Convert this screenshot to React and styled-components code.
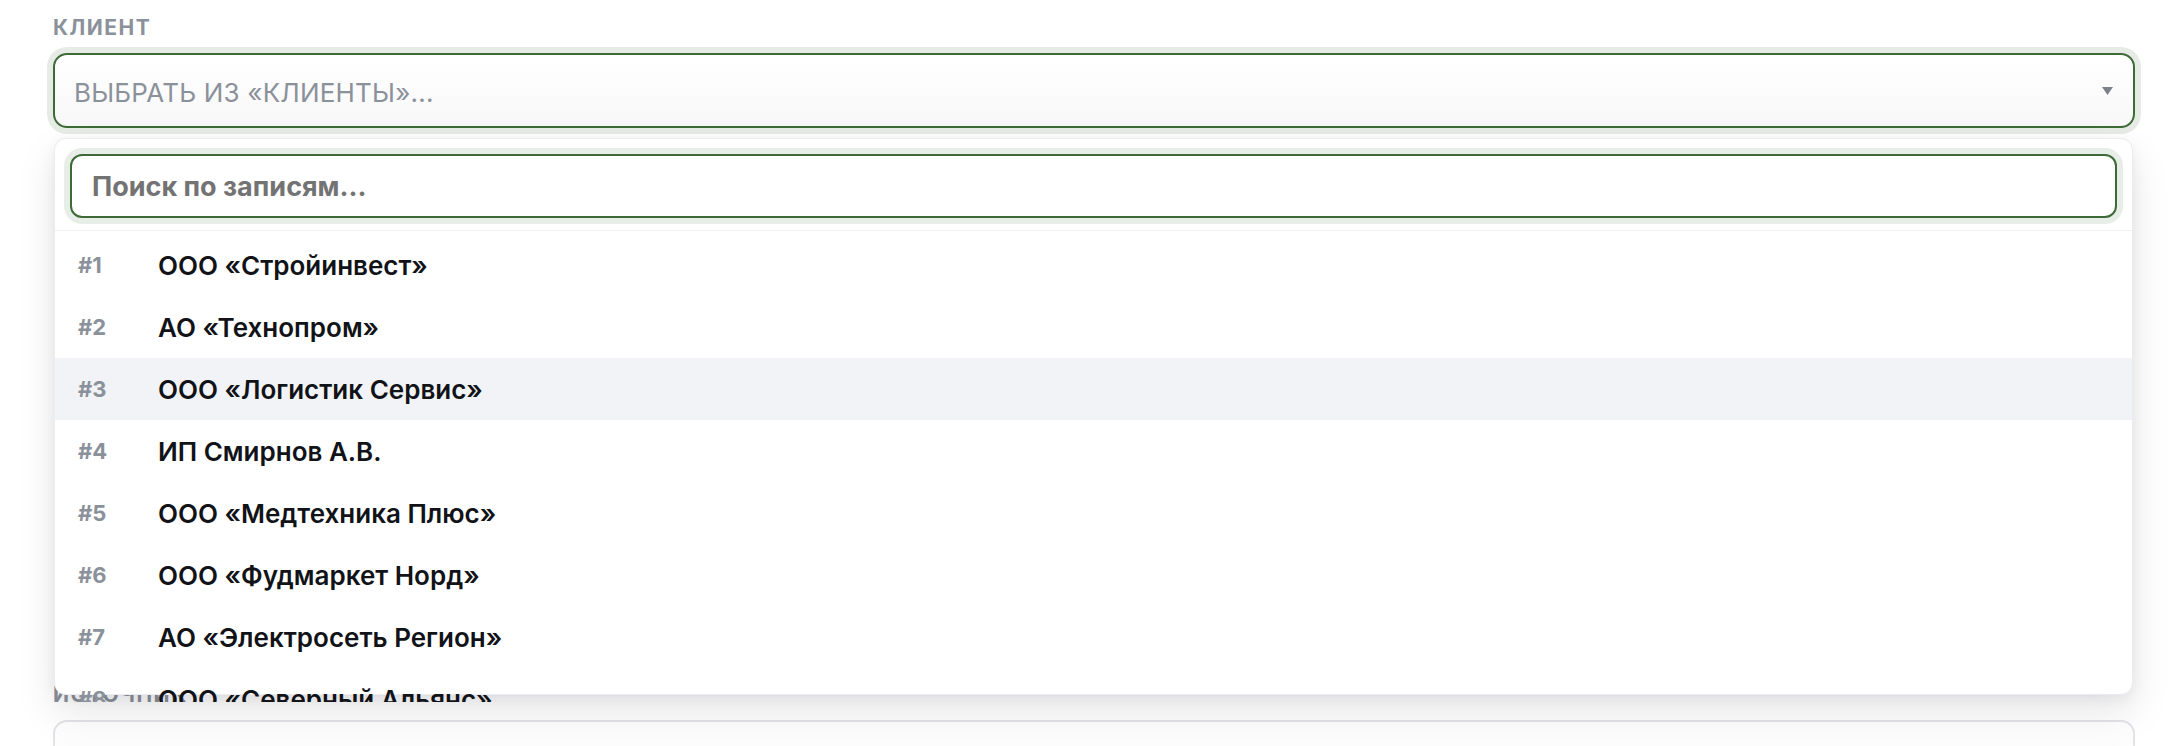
import React from "react";
import styled, { createGlobalStyle } from "styled-components";

const GlobalStyle = createGlobalStyle`
    html, body {
        margin: 0;
        background: #ffffff;
    }
    body {
        font-family: Inter, "Noto Sans", sans-serif;
        -webkit-font-smoothing: antialiased;
    }
`;

const Page = styled.div`
    box-sizing: border-box;
    height: 746px;
    overflow: hidden;
    padding: 16px 47px 0 53px;
`;

const Field = styled.div`
    position: relative;
    margin-bottom: ${props => props.$spacing || 0}px;
`;

const Label = styled.div`
    font-size: 21px;
    line-height: 24px;
    font-weight: 700;
    letter-spacing: 1.5px;
    text-transform: uppercase;
    color: #8b919a;
    margin-bottom: 13px;
`;

const SelectBox = styled.div`
    box-sizing: border-box;
    height: 75px;
    display: flex;
    align-items: center;
    justify-content: space-between;
    padding: 0 20px 0 ${props => props.$indent || 19}px;
    border: 2px solid ${props => (props.$open ? "#3d6a37" : "#e3e3e9")};
    border-radius: 14px;
    box-shadow: ${props => (props.$open ? "0 0 0 6px rgba(61, 106, 55, 0.13)" : "none")};
    background: linear-gradient(180deg, #ffffff 0%, #f8f8f9 100%);
`;

const Placeholder = styled.span`
    font-size: 26px;
    font-weight: 400;
    letter-spacing: 0.2px;
    text-transform: uppercase;
    color: #8b919a;
    padding-top: 4px;
`;

const Value = styled.span`
    font-size: 26px;
    font-weight: 600;
    color: #16181d;
`;

const Panel = styled.div`
    position: absolute;
    z-index: 10;
    top: calc(100% + 10px);
    left: 1px;
    right: 2px;
    height: 557px;
    box-sizing: border-box;
    border: 1px solid #ebebf0;
    border-radius: 12px;
    background: #ffffff;
    box-shadow: 0 18px 40px rgba(20, 20, 40, 0.1), 0 4px 14px rgba(20, 20, 40, 0.06);
`;

const SearchWrap = styled.div`
    padding: 15px 15px 12px;
    border-bottom: 1px solid #efeff3;
`;

const SearchInput = styled.input`
    display: block;
    width: 100%;
    height: 64px;
    box-sizing: border-box;
    padding: 0 20px;
    border: 2px solid #3d6a37;
    border-radius: 12px;
    box-shadow: 0 0 0 6px rgba(61, 106, 55, 0.12);
    outline: none;
    font-family: inherit;
    font-size: 27px;
    font-weight: 700;
    color: #222;
    background: #fff;
    &::placeholder {
        color: #737373;
        opacity: 1;
    }
`;

const List = styled.div`
    height: 471px;
    box-sizing: border-box;
    padding-top: 3px;
    overflow: hidden;
`;

const Row = styled.div`
    display: flex;
    align-items: center;
    height: 62px;
    padding-left: 23px;
    background: ${props => (props.$active ? "#f2f3f6" : "transparent")};
`;

const Num = styled.span`
    width: 80px;
    flex-shrink: 0;
    font-size: 22px;
    font-weight: 700;
    color: #8b919a;
`;

const Name = styled.span`
    font-size: 26px;
    font-weight: 600;
    color: #111318;
`;

const Chevron = () => (
    <svg width="11" height="8" viewBox="0 0 11 8">
        <polygon points="0,0 11,0 5.5,8" fill="#7c828b" />
    </svg>
);

const clients = [
    "ООО «Стройинвест»",
    "АО «Технопром»",
    "ООО «Логистик Сервис»",
    "ИП Смирнов А.В.",
    "ООО «Медтехника Плюс»",
    "ООО «Фудмаркет Норд»",
    "АО «Электросеть Регион»",
    "ООО «Северный Альянс»",
    "ИП Кузнецова Е.Н.",
    "ООО «Агроресурс»",
];

function App() {
    const [hovered] = React.useState(2);

    return (
        <Page>
            <GlobalStyle />
            <Field $spacing={555}>
                <Label>Клиент</Label>
                <SelectBox $open>
                    <Placeholder>Выбрать из «Клиенты»...</Placeholder>
                    <Chevron />
                </SelectBox>
                <Panel>
                    <SearchWrap>
                        <SearchInput placeholder="Поиск по записям..." readOnly />
                    </SearchWrap>
                    <List>
                        {clients.map((name, i) => (
                            <Row key={name} $active={i === hovered}>
                                <Num>#{i + 1}</Num>
                                <Name>{name}</Name>
                            </Row>
                        ))}
                    </List>
                </Panel>
            </Field>
            <Field>
                <Label>Источник</Label>
                <SelectBox $indent={28}>
                    <Value>Прямой контакт</Value>
                </SelectBox>
            </Field>
        </Page>
    );
}

export default App;
